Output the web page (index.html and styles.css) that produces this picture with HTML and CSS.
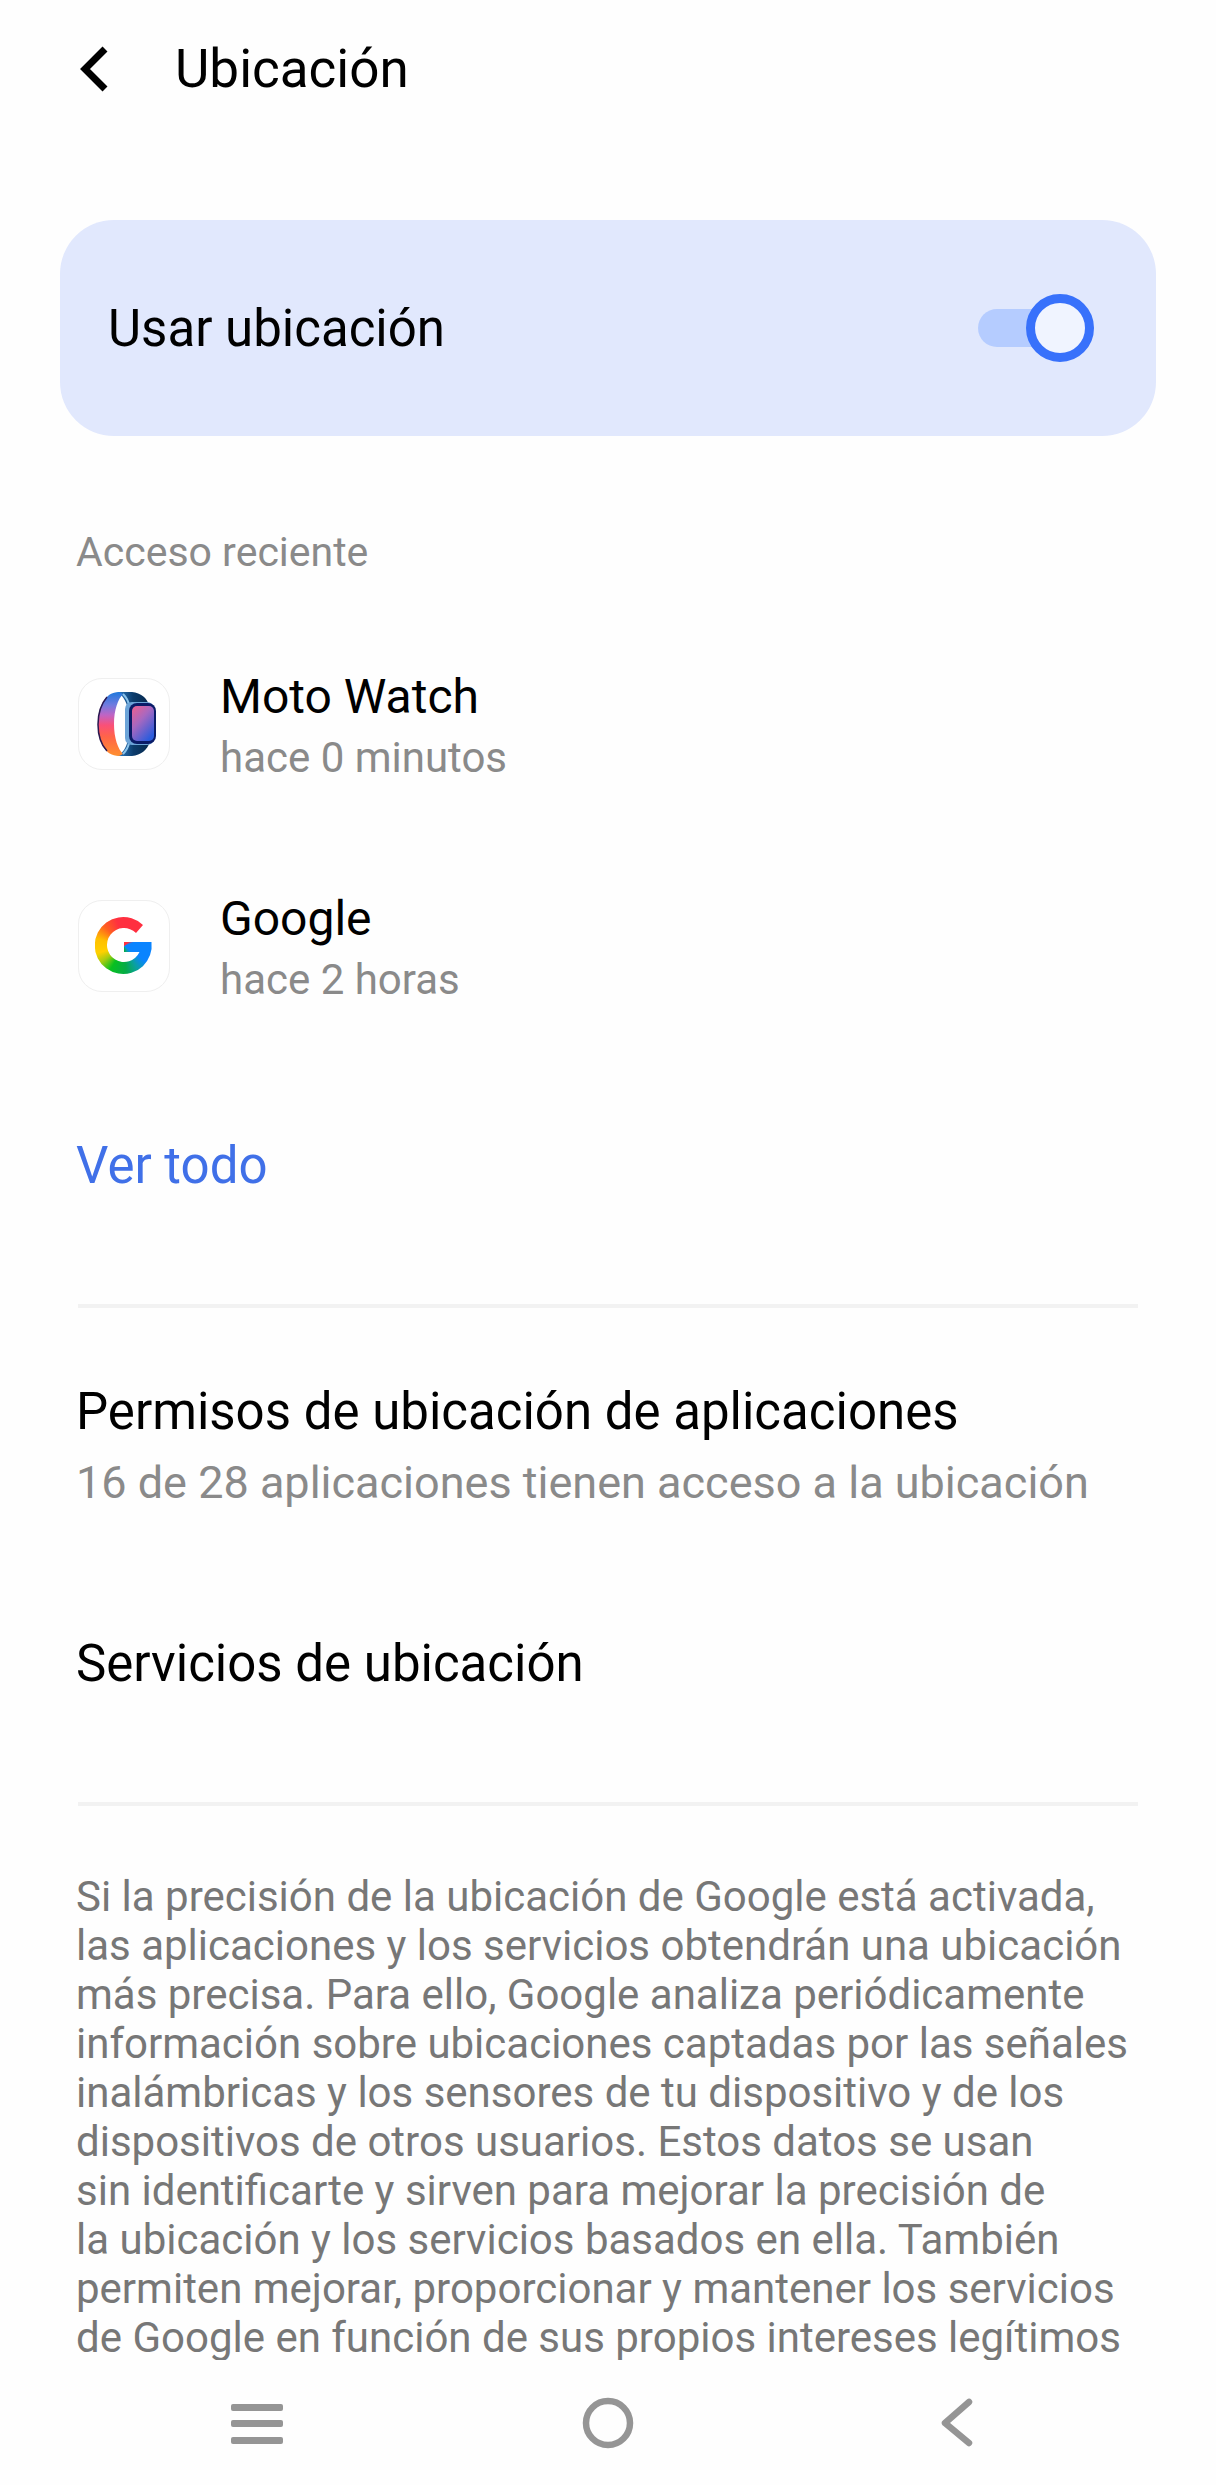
FILE: index.html
```
<!DOCTYPE html>
<html lang="es">
<head>
  <meta charset="UTF-8">
  <meta name="viewport" content="width=device-width, initial-scale=1.0">
  <title>Ubicación</title>
  <link rel="stylesheet" href="styles.css">
</head>
<body>

  <header class="header">
    <button class="back" type="button" aria-label="Atrás">
      <svg width="30" height="48" viewBox="0 0 30 48">
        <path d="M25 4 L5 24 L25 44" fill="none" stroke="#000" stroke-width="7"/>
      </svg>
    </button>
    <h1>Ubicación</h1>
  </header>

  <main class="content">
    <div class="card">
      <label for="useLocation">Usar ubicación</label>
      <input class="switch" type="checkbox" role="switch" id="useLocation" checked>
    </div>

    <section class="recent">
      <h2>Acceso reciente</h2>
      <ul class="apps">
        <li class="app">
          <span class="app-icon">
            <svg width="66" height="66" viewBox="-6 0 66 66">
              <defs>
                <linearGradient id="band" x1="0" y1="0" x2="0" y2="1">
                  <stop offset="0" stop-color="#1e78dc"/>
                  <stop offset="0.2" stop-color="#6f7ce0"/>
                  <stop offset="0.36" stop-color="#c064c4"/>
                  <stop offset="0.52" stop-color="#fa5078"/>
                  <stop offset="0.7" stop-color="#ff6448"/>
                  <stop offset="1" stop-color="#ff9030"/>
                </linearGradient>
                <linearGradient id="screen" x1="0" y1="0" x2="0.7" y2="1">
                  <stop offset="0" stop-color="#f0608e"/>
                  <stop offset="0.45" stop-color="#a868c0"/>
                  <stop offset="1" stop-color="#2c5cdc"/>
                </linearGradient>
                <linearGradient id="strap" x1="0" y1="0" x2="1" y2="0">
                  <stop offset="0" stop-color="#2f80c8"/>
                  <stop offset="0.5" stop-color="#0c3c6c"/>
                  <stop offset="1" stop-color="#06284c"/>
                </linearGradient>
              </defs>
              <path d="M20 1 H35 C44 2 50 7 52 14 L31 18 C29 9 25 4 20 1 Z" fill="url(#strap)"/>
              <path d="M20 65 H35 C44 64 50 59 53 51 L31 49 C29 57 26 62 20 65 Z" fill="url(#strap)"/>
              <path d="M22 1 C8 1 1 16 1 33 C1 51 8 65 22 65 L26 63 C21 58 17 47 17 33 C17 19 21 8 26 3 Z" fill="url(#band)"/>
              <path d="M10 6 C-2 20 -2 47 10 60" fill="none" stroke="#2a1850" stroke-width="1.5"/>
              <path d="M26 3 C29 6 31 9 32 14 M26 63 C29 60 31 57 32 52" fill="none" stroke="#8cc4ec" stroke-width="2"/>
              <rect x="28" y="11" width="29" height="43" rx="7" fill="#6ca4d8"/>
              <rect x="32" y="12" width="27" height="41" rx="8" fill="#0a1c68"/>
              <rect x="35" y="15" width="22" height="35" rx="5" fill="url(#screen)"/>
            </svg>
          </span>
          <div class="app-text">
            <span class="app-name">Moto Watch</span>
            <span class="app-time">hace 0 minutos</span>
          </div>
        </li>
        <li class="app">
          <span class="app-icon"><span class="google"></span></span>
          <div class="app-text">
            <span class="app-name">Google</span>
            <span class="app-time">hace 2 horas</span>
          </div>
        </li>
      </ul>
      <a class="see-all" href="#">Ver todo</a>
    </section>

    <section class="links">
      <a class="link" href="#">
        <span class="link-title">Permisos de ubicación de aplicaciones</span>
        <span class="link-sub">16 de 28 aplicaciones tienen acceso a la ubicación</span>
      </a>
      <a class="link" href="#">
        <span class="link-title">Servicios de ubicación</span>
      </a>
    </section>

    <p class="info">
      Si la precisión de la ubicación de Google está activada,<br>
      las aplicaciones y los servicios obtendrán una ubicación<br>
      más precisa. Para ello, Google analiza periódicamente<br>
      información sobre ubicaciones captadas por las señales<br>
      inalámbricas y los sensores de tu dispositivo y de los<br>
      dispositivos de otros usuarios. Estos datos se usan<br>
      sin identificarte y sirven para mejorar la precisión de<br>
      la ubicación y los servicios basados en ella. También<br>
      permiten mejorar, proporcionar y mantener los servicios<br>
      de Google en función de sus propios intereses legítimos
    </p>
  </main>

  <nav class="navbar">
    <button type="button" aria-label="Recientes">
      <svg width="52" height="52" viewBox="0 0 52 52">
        <g fill="#959595">
          <rect x="0" y="7" width="52" height="7" rx="2"/>
          <rect x="0" y="23" width="52" height="7" rx="2"/>
          <rect x="0" y="40" width="52" height="7" rx="2"/>
        </g>
      </svg>
    </button>
    <button type="button" aria-label="Inicio">
      <svg width="52" height="52" viewBox="0 0 52 52">
        <circle cx="26" cy="26" r="22" fill="none" stroke="#959595" stroke-width="6.5"/>
      </svg>
    </button>
    <button type="button" aria-label="Volver">
      <svg width="52" height="52" viewBox="0 0 52 52">
        <path d="M36 5 L12 26 L36 46" fill="none" stroke="#959595" stroke-width="6.5" stroke-linecap="round" stroke-linejoin="round"/>
      </svg>
    </button>
  </nav>

</body>
</html>
```
FILE: styles.css
```
*, *::before, *::after {
  box-sizing: border-box;
}

body {
  display: flex;
  flex-direction: column;
  height: 100vh;
  margin: 0;
  background-color: #fefefe;
  color: #000;
  font-family: Roboto, sans-serif;
}

h1, h2, p, ul {
  margin: 0;
  padding: 0;
  font-weight: 400;
}

button {
  display: flex;
  padding: 0;
  border: none;
  background: none;
}

a {
  color: inherit;
  text-decoration: none;
}

/* Header */
.header {
  display: flex;
  flex: none;
  align-items: center;
  gap: 65px;
  height: 138px;
  padding: 0 80px;
}

.header h1 {
  font-size: 53px;
}

.content {
  flex: 1;
  min-height: 0;
  padding: 82px 60px 0;
  overflow: hidden;
}

.card {
  display: flex;
  align-items: center;
  justify-content: space-between;
  height: 216px;
  padding: 0 62px 0 48px;
  border-radius: 54px;
  background-color: #e1e8fd;
  font-size: 51px;
}

.switch {
  display: flex;
  align-items: center;
  width: 116px;
  height: 68px;
  margin: 0;
  appearance: none;
}

.switch::before {
  content: "";
  flex: none;
  width: 82px;
  height: 38px;
  border-radius: 19px;
  background-color: #b5ccff;
}

.switch::after {
  content: "";
  flex: none;
  width: 68px;
  height: 68px;
  margin-left: -34px;
  border: 9px solid #3871fb;
  border-radius: 50%;
  background-color: #f0f4ff;
}

/* Recent access */
.recent {
  padding: 92px 16px 108px;
}

.recent h2 {
  margin-bottom: 37px;
  color: #8a8a8a;
  font-size: 41px;
  line-height: 48px;
}

.apps {
  list-style: none;
}

.app {
  display: flex;
  align-items: center;
  gap: 50px;
  height: 222px;
}

.app-icon {
  display: flex;
  align-items: center;
  justify-content: center;
  width: 92px;
  height: 92px;
  margin-left: 2px;
  border: 1px solid #efefef;
  border-radius: 24px;
  background-color: #fff;
}

.google {
  width: 58px;
  height: 58px;
  background: conic-gradient(#ff2f40 50deg, #0a84ff 70deg 125deg, #0aa0a0 150deg, #06ab48 175deg, #08c020 210deg, #a8cc10 235deg, #ffd000 255deg, #ffc000 285deg, #ff6020 315deg, #ff3040 345deg);
  clip-path: path("M48 8 A28.5 28.5 0 1 0 56.5 25 H29 V35 H44.5 A17 17 0 1 1 41 16 Z");
}

.app-text {
  display: flex;
  flex-direction: column;
  padding-top: 10px;
}

.app-name {
  font-size: 48px;
  line-height: 58px;
}

.app-time {
  color: #8a8a8a;
  font-size: 42px;
  line-height: 64px;
}

.see-all {
  display: block;
  margin-top: 79px;
  color: #4070e8;
  font-size: 51px;
  line-height: 60px;
}

/* Links between the dividers */
.links {
  display: flex;
  flex-direction: column;
  gap: 121px;
  margin: 0 18px;
  padding: 74px 0 108px;
  border: solid #f2f2f2;
  border-width: 4px 0;
}

.link {
  display: flex;
  flex-direction: column;
  gap: 11px;
  margin-left: -2px;
  line-height: 60px;
  white-space: nowrap;
}

.link-title {
  font-size: 51px;
}

.link-sub {
  color: #8a8a8a;
  font-size: 45px;
}

.info {
  padding: 66px 16px 0;
  color: #777;
  font-size: 42px;
  line-height: 49px;
  white-space: nowrap;
}

/* Navigation bar */
.navbar {
  display: flex;
  flex: none;
  align-items: center;
  justify-content: space-between;
  height: 125px;
  padding: 0 231px;
}
```
